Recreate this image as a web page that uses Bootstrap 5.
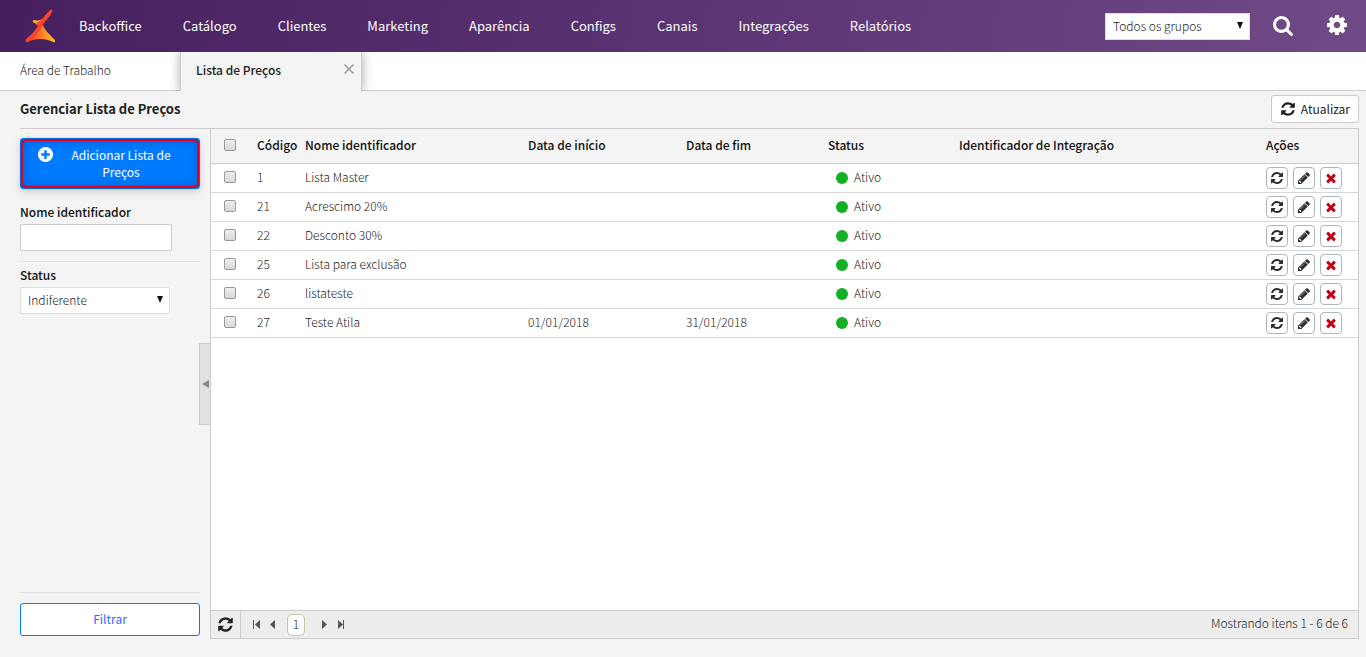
<!DOCTYPE html>
<html lang="pt-BR">
<head>
<meta charset="utf-8">
<meta name="viewport" content="width=device-width, initial-scale=1">
<title>Lista de Preços</title>
<link href="https://cdn.jsdelivr.net/npm/bootstrap@5.3.0/dist/css/bootstrap.min.css" rel="stylesheet">
<style>
  body { font-family: "Noto Sans CJK JP", "Open Sans", sans-serif; font-size: 12px; font-weight: 300; line-height: 17px; color: #1c1c1c; background: #f4f4f4; }
  .ico { fill: currentColor; display: block; flex: none; }
  .topbar { min-height: 52px; background: linear-gradient(100deg, #451f5e, #704a87); padding: 0 19px 0 24px; }
  .main-menu { gap: 41px; margin-left: 23px; }
  .main-menu a { color: #fff; font-size: 13px; font-weight: 400; line-height: 20px; text-decoration: none; white-space: nowrap; }
  .pick { border: 1px solid #ddd; border-radius: 2px; background: #fff; color: #1c1c1c; font-weight: 300; width: 150px; height: 27px; padding: 0 20px 2px 7px; appearance: none; line-height: 17px; }
  .pick-box { position: relative; width: 150px; }
  .pick-box::after { content: ""; position: absolute; right: 7px; top: 9px; border: solid transparent; border-width: 7px 3px 0; border-top-color: #111; pointer-events: none; }
  .pick-groups, .pick-groups .pick { width: 145px; border-radius: 0; }
  .icon-btn { border: 0; background: none; color: #fff; padding: 0; }
  .cog-btn { padding-bottom: 2px; }
  .find-btn { margin: 0 34px 0 23px; }
  .tab-strip { background: #fff; height: 39px; border-bottom: 1px solid #ccc; }
  .tab-strip a { color: #1c1c1c; text-decoration: none; padding-bottom: 3px; }
  .tab-first { width: 180px; padding-left: 20px; }
  .tab-open { width: 182px; height: 39px; background: #f4f4f4; border: solid #ccc; border-width: 0 1px; padding: 0 6px 0 15px; box-shadow: 0 0 10px rgba(0,0,0,.35); clip-path: inset(0 -12px 0 -12px); }
  .tab-open a { font-weight: 500; padding-bottom: 5px; }
  .tab-open button { border: 0; background: none; padding: 0 0 5px; color: #999; }
  .title-row { min-height: 37px; padding: 0 7px 2px 20px; }
  .title-row h1 { font-size: 13px; font-weight: 700; line-height: 20px; color: #222; }
  .btn-reload { background: #fff; border: 1px solid #ccc; border-radius: 3px; height: 28px; padding: 0 8px; gap: 5px; color: #1c1c1c; }
  .workarea { padding: 0 7px 18px 20px; }
  .side { width: 190px; border-top: 1px solid #ccc; position: relative; padding: 9px 10px 3px 0; }
  .btn-add { background: #007bff; color: #fff; border: 1px solid #007bff; border-radius: 3px; width: 180px; min-height: 51px; margin-bottom: 10px; padding: 7px 10px 8px 17px; font-weight: 400; position: relative; box-shadow: inset 0 0 10px 3px rgba(0,50,150,.35), 0 3px 8px rgba(0,0,0,.15); }
  .btn-add .ico { margin-top: 1px; }
  .btn-add::after { content: ""; position: absolute; inset: 0; border: 2px solid #e2001a; border-radius: 6px; box-shadow: 0 0 2px #1b3f90; }
  .side label, .grid-list th { font-weight: 500; color: #111; }
  .side label { margin: 4px 0; }
  .side hr { margin: 0; border-color: #aaa; }
  .name-field { width: 152px; height: 27px; border: 1px solid #ccc; border-radius: 2px; background: #fff; padding: 0 7px; margin-bottom: 10px; }
  .btn-filter { height: 33px; margin-top: 10px; padding-bottom: 3px; background: #fff; border: 1px solid #007bff; border-radius: 3px; color: #2f6bff; }
  .side-handle { position: absolute; right: -1px; top: 214px; width: 12px; height: 82px; background: #e1e1e1; border: 1px solid #ccc; padding: 0; }
  .side-handle::after { content: ""; display: block; margin: auto 1px auto 2px; border: solid transparent; border-width: 4px 7px 4px 0; border-right-color: #888; width: 0; }
  .panel { border: 1px solid #ccc; background: #fff; min-width: 0; }
  .grid-list { table-layout: fixed; width: 100%; border-collapse: separate; border-spacing: 0; }
  .grid-list th, .grid-list td { padding: 0 5px 4px; border-bottom: 1px solid #d8d8d8; white-space: nowrap; }
  .grid-list th { height: 35px; background: #f4f4f4; border-color: #ccc; }
  .grid-list td { height: 29px; }
  .grid-list .act-cell { padding-bottom: 0; }
  .grid-list .pickcell { padding: 0 5px 2px 13px; }
  .w-pick { width: 41px; } .w-code { width: 48px; } .w-name { width: 223px; } .w-start { width: 158px; } .w-end { width: 142px; } .w-status { width: 131px; } .w-act { width: 97px; }
  .tick { appearance: none; display: block; width: 12px; height: 12px; margin: 0; border: 1px solid #999; border-radius: 2px; background: linear-gradient(#eee, #d8d8d8); }
  .state { gap: 6px; padding-left: 8px; }
  .dot { width: 12px; height: 12px; border-radius: 50%; background: #13b022; margin-top: 4px; }
  .act { width: 22px; height: 22px; border: 1px solid #adb5bd; border-radius: 4px; background: #fff; color: #2d2d2d; padding: 0; display: flex; align-items: center; justify-content: center; }
  .act-row { gap: 5px; }
  .act-del { color: #c40014; }
  .pager { background: #ededed; border-top: 1px solid #ccc; height: 28px; padding-right: 10px; }
  .pager button { border: 0; background: none; padding: 0; color: #555; }
  .pager .again { width: 30px; height: 27px; border-right: 1px solid #ccc; color: #222; padding-left: 6px; }
  .page-no { width: 18px; height: 22px; line-height: 17px; border: 1px solid #c5c5a8; border-radius: 5px; background: #fff; text-align: center; margin: 0 8px 0 10px; }
  .pager-info { padding-bottom: 4px; }
</style>
</head>
<body class="d-flex flex-column min-vh-100">
<svg width="0" height="0" class="d-none" aria-hidden="true">
  <symbol id="refresh" viewBox="0 0 1792 1792"><path d="M1639 1056q0 5-1 7-64 268-268 434.500t-478 166.500q-146 0-282.500-55t-243.500-157l-129 129q-19 19-45 19t-45-19-19-45v-448q0-26 19-45t45-19h448q26 0 45 19t19 45-19 45l-137 137q71 66 161 102t187 36q134 0 250-65t186-179q11-17 53-117 8-23 30-23h192q13 0 22.500 9.500t9.500 22.500zm25-800v448q0 26-19 45t-45 19h-448q-26 0-45-19t-19-45 19-45l138-138q-148-137-349-137-134 0-250 65t-186 179q-11 17-53 117-8 23-30 23h-199q-13 0-22.500-9.500t-9.500-22.500v-7q65-268 270-434.500t480-166.500q146 0 284 55.500t245 156.500l130-129q19-19 45-19t45 19 19 45z"/></symbol>
  <symbol id="pencil" viewBox="0 0 1792 1792"><path d="M491 1536l91-91-235-235-91 91v107h128v128h107zm523-928q0-22-22-22-10 0-17 7l-542 542q-7 7-7 17 0 22 22 22 10 0 17-7l542-542q7-7 7-17zm-54-192l416 416-832 832h-416v-416zm683 96q0 53-37 90l-166 166-416-416 166-165q36-38 90-38 53 0 91 38l235 234q37 39 37 91z"/></symbol>
  <symbol id="times" viewBox="0 0 1792 1792"><path d="M1490 1322q0 40-28 68l-136 136q-28 28-68 28t-68-28l-294-294-294 294q-28 28-68 28t-68-28l-136-136q-28-28-28-68t28-68l294-294-294-294q-28-28-28-68t28-68l136-136q28-28 68-28t68 28l294 294 294-294q28-28 68-28t68 28l136 136q28 28 28 68t-28 68l-294 294 294 294q28 28 28 68z"/></symbol>
</svg>

<header class="topbar d-flex align-items-center">
  <a href="#" aria-label="Início"><svg class="d-block" width="32" height="34" viewBox="0 0 32 34"><defs><linearGradient id="foot" x1="0" x2="1"><stop offset="0" stop-color="#ff3a2a"/><stop offset=".5" stop-color="#ff7a26"/><stop offset="1" stop-color="#ffc125"/></linearGradient></defs><path d="M14 17l5-1c1 4 6 9 11 14 2 2 1 4-1 3-8-4-17-4-26 0z" fill="url(#foot)"/><path d="M9 13c-1-1 0-2 1-2 4 1 7 0 10-2l-5 9c-1-2-4-4-6-5z" fill="#ffae22"/><path d="M26 1c2-1 3 0 2 2-2 5-7 9-10 14-3 7-9 13-14 16-2 1-3-1-2-3 5-4 9-8 12-12 0-2-1-3-2-4 6-2 9-8 14-13z" fill="#ff4128"/></svg></a>
  <nav class="main-menu d-flex" aria-label="Principal">
    <a href="#">Backoffice</a><a href="#">Catálogo</a><a href="#">Clientes</a><a href="#">Marketing</a><a href="#">Aparência</a><a href="#">Configs</a><a href="#">Canais</a><a href="#">Integrações</a><a href="#">Relatórios</a>
  </nav>
  <div class="pick-box pick-groups ms-auto"><select class="pick" aria-label="Grupos"><option>Todos os grupos</option></select></div>
  <button class="icon-btn find-btn" aria-label="Pesquisar"><svg class="ico" width="20" height="20" viewBox="64 128 1664 1664"><path d="M1216 832q0-185-131.500-316.500t-316.500-131.500-316.500 131.500-131.500 316.500 131.500 316.500 316.500 131.500 316.500-131.500 131.500-316.500zm512 832q0 52-38 90t-90 38q-54 0-90-38l-343-342q-179 124-399 124-143 0-273.500-55.500t-225-150-150-225-55.500-273.500 55.500-273.500 150-225 225-150 273.500-55.500 273.500 55.500 225 150 150 225 55.500 273.500q0 220-124 399l343 343q37 37 37 90z"/></svg></button>
  <button class="icon-btn cog-btn" aria-label="Configurações"><svg class="ico" width="20" height="20" viewBox="128 128 1536 1536"><path d="M1152 896q0-106-75-181t-181-75-181 75-75 181 75 181 181 75 181-75 75-181zm512-109v222q0 12-8 23t-20 13l-185 28q-19 54-39 91 35 50 107 138 10 12 10 25t-9 23q-27 37-99 108t-94 71q-12 0-26-9l-138-108q-44 23-91 38-16 136-29 186-7 28-36 28h-222q-14 0-24.500-8.500t-11.500-21.500l-28-184q-49-16-90-37l-141 107q-10 9-25 9-14 0-25-11-126-114-165-168-7-10-7-23 0-12 8-23 15-21 51-66.500t54-70.500q-27-50-41-99l-183-27q-13-2-21-12.500t-8-23.500v-222q0-12 8-23t19-13l186-28q14-46 39-92-40-57-107-138-10-12-10-24 0-10 9-23 26-36 98.500-107.500t94.500-71.500q13 0 26 10l138 107q44-23 91-38 16-136 29-186 7-28 36-28h222q14 0 24.500 8.500t11.500 21.500l28 184q49 16 90 37l142-107q9-9 24-9 13 0 25 10 129 119 165 170 7 8 7 22 0 12-8 23-15 21-51 66.500t-54 70.500q26 50 41 98l183 28q13 2 21 12.500t8 23.500z"/></svg></button>
</header>

<div class="tab-strip d-flex">
  <div class="tab-first d-flex align-items-center"><a href="#">Área de Trabalho</a></div>
  <div class="tab-open d-flex align-items-center justify-content-between"><a href="#">Lista de Preços</a><button aria-label="Fechar"><svg class="d-block" width="12" height="12" viewBox="0 0 12 12" stroke="currentColor" stroke-width="1.500"><path d="M1.500 1.500l9 9M10.500 1.500l-9 9"/></svg></button></div>
</div>

<div class="title-row d-flex align-items-center justify-content-between">
  <h1 class="m-0">Gerenciar Lista de Preços</h1>
  <button class="btn-reload d-flex align-items-center"><svg class="ico" width="16" height="16"><use href="#refresh"/></svg>Atualizar</button>
</div>

<main class="workarea d-flex flex-grow-1">
  <aside class="side d-flex flex-column flex-shrink-0">
    <button class="btn-add d-flex align-items-start"><svg class="ico" width="15" height="15" viewBox="128 128 1536 1536"><path d="M1344 960v-128q0-26-19-45t-45-19h-256v-256q0-26-19-45t-45-19h-128q-26 0-45 19t-19 45v256h-256q-26 0-45 19t-19 45v128q0 26 19 45t45 19h256v256q0 26 19 45t45 19h128q26 0 45-19t19-45v-256h256q26 0 45-19t19-45zm320-64q0 209-103 385.500t-279.500 279.500-385.500 103-385.500-103-279.500-279.500-103-385.500 103-385.500 279.500-279.500 385.500-103 385.500 103 279.500 279.500 103 385.500z"/></svg><span class="flex-grow-1">Adicionar Lista de<br>Preços</span></button>
    <label for="nome">Nome identificador</label>
    <input id="nome" type="text" class="name-field">
    <hr>
    <label for="status">Status</label>
    <div class="pick-box"><select id="status" class="pick"><option>Indiferente</option></select></div>
    <hr class="mt-auto">
    <button class="btn-filter w-100">Filtrar</button>
    <button class="side-handle" aria-label="Recolher filtros"></button>
  </aside>

  <section class="panel d-flex flex-column flex-grow-1">
    <table class="grid-list">
      <colgroup><col class="w-pick"><col class="w-code"><col class="w-name"><col class="w-start"><col class="w-end"><col class="w-status"><col><col class="w-act"></colgroup>
      <thead><tr><th class="pickcell"><input type="checkbox" class="tick" aria-label="Selecionar todos"></th><th>Código</th><th>Nome identificador</th><th>Data de início</th><th>Data de fim</th><th>Status</th><th>Identificador de Integração</th><th>Ações</th></tr></thead>
      <tbody id="lists"></tbody>
    </table>
    <div class="pager d-flex align-items-center mt-auto">
      <button class="again" aria-label="Recarregar"><svg class="ico" width="17" height="17"><use href="#refresh"/></svg></button>
      <div class="d-flex align-items-center ms-2 ps-1">
        <button aria-label="Primeira"><svg class="ico" width="8" height="9" viewBox="0 0 8 9"><path d="M0 0h1v9H0zM7 0v9L2 4.500z"/></svg></button>
        <button class="ms-2" aria-label="Anterior"><svg class="ico" width="8" height="9" viewBox="0 0 8 9"><path d="M6 0v9L1 4.500z"/></svg></button>
        <span class="page-no">1</span>
        <button class="ms-2" aria-label="Próxima"><svg class="ico" width="8" height="9" viewBox="0 0 8 9"><path d="M1 0v9l5-4.500z"/></svg></button>
        <button class="ms-2" aria-label="Última"><svg class="ico" width="8" height="9" viewBox="0 0 8 9"><path d="M1 0v9l5-4.500zM6 0h1v9H6z"/></svg></button>
      </div>
      <span class="pager-info ms-auto">Mostrando itens 1 - 6 de 6</span>
    </div>
  </section>
</main>

<script src="https://cdn.jsdelivr.net/npm/bootstrap@5.3.0/dist/js/bootstrap.bundle.min.js"></script>
<script>
  const lists = [
    [1, "Lista Master", "", ""],
    [21, "Acrescimo 20%", "", ""],
    [22, "Desconto 30%", "", ""],
    [25, "Lista para exclusão", "", ""],
    [26, "listateste", "", ""],
    [27, "Teste Atila", "01/01/2018", "31/01/2018"]
  ];
  const act = (icon, label, size, cls = "") =>
    `<button class="act ${cls}" aria-label="${label}"><svg class="ico" width="${size}" height="${size}"><use href="#${icon}"/></svg></button>`;
  document.getElementById("lists").innerHTML = lists.map(([id, name, from, to]) => `
    <tr><td class="pickcell"><input type="checkbox" class="tick" aria-label="Selecionar ${name}"></td>
    <td>${id}</td><td>${name}</td><td>${from}</td><td>${to}</td>
    <td><div class="state d-flex align-items-center"><span class="dot"></span>Ativo</div></td><td></td>
    <td class="act-cell"><div class="act-row d-flex">${act("refresh", "Atualizar", 14)}${act("pencil", "Editar", 14)}${act("times", "Excluir", 14, "act-del")}</div></td></tr>`).join("");
</script>
</body>
</html>
